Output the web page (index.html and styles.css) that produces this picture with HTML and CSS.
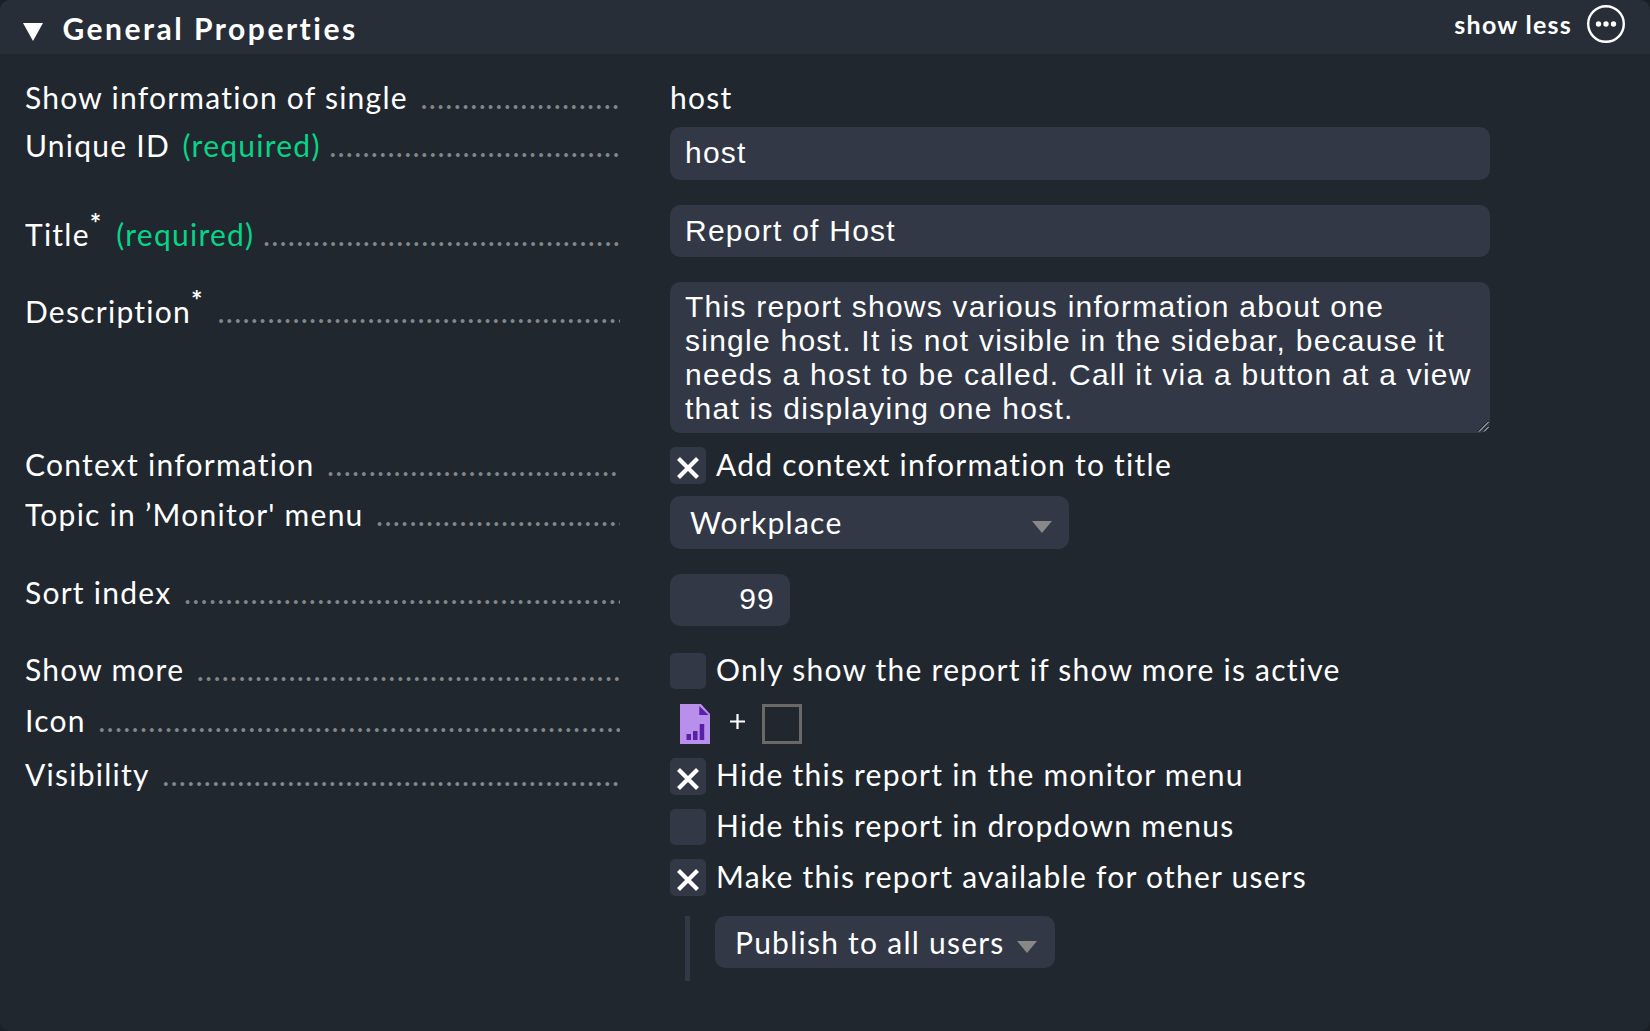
FILE: index.html
```html
<!DOCTYPE html>
<html lang="en">
<head>
<meta charset="utf-8">
<title>General Properties</title>
<link rel="stylesheet" href="styles.css">
</head>
<body>
<form class="panel">
  <header class="panel-head">
    <svg class="fold" width="20" height="18" viewBox="0 0 20 18"><path d="M0 0h20L10 18z" fill="#fff"/></svg>
    <h1 class="panel-title">General Properties</h1>
    <span class="less">show less</span>
    <svg class="more" width="40" height="40" viewBox="0 0 40 40"><circle cx="20" cy="20" r="17.8" fill="none" stroke="#fff" stroke-width="2.4"/><g fill="#fff"><circle cx="12.5" cy="20" r="2.7"/><circle cx="20" cy="20" r="2.7"/><circle cx="27.5" cy="20" r="2.7"/></g></svg>
  </header>
  <div class="rows">
    <div class="row row-info">
      <div class="label"><span>Show information of single</span><span class="dots">........................</span></div>
      <div class="value">host</div>
    </div>
    <div class="row row-id">
      <div class="label"><span>Unique ID</span><span class="req req-id">(required)</span><span class="dots dots-req">...................................</span></div>
      <input class="field field-tall" type="text" value="host">
    </div>
    <div class="row row-title">
      <div class="label label-low"><span>Title</span><span class="star">*</span><span class="req">(required)</span><span class="dots dots-title">...........................................</span></div>
      <input class="field field-title" type="text" value="Report of Host">
    </div>
    <div class="row row-desc">
      <div class="label label-low"><span>Description</span><span class="star">*</span><span class="dots dots-desc">.................................................</span></div>
      <div class="area-wrap">
        <textarea class="field area">This report shows various information about one single host. It is not visible in the sidebar, because it needs a host to be called. Call it via a button at a view that is displaying one host.</textarea>
        <svg class="grip" width="11" height="11" viewBox="0 0 11 11"><path d="M1 10.500L10.500 1M6 10.500L10.500 6" stroke="#d5d7da" stroke-width="1"/><path d="M0 10L10 0M5 10L10 5" stroke="#15181d" stroke-width="0.8"/></svg>
      </div>
    </div>
    <div class="row row-context">
      <div class="label"><span>Context information</span><span class="dots">....................................</span></div>
      <div class="check"><span class="box box-on box-up"><svg width="22" height="22" viewBox="0 0 22 22"><path d="M1.5 1.5l19 19M20.5 1.500L1.500 20.500" stroke="#fff" stroke-width="4.2"/></svg></span><span>Add context information to title</span></div>
    </div>
    <div class="row row-topic">
      <div class="label"><span>Topic in ’Monitor' menu</span><span class="dots">..............................</span></div>
      <div class="select select-topic"><span>Workplace</span><svg width="20" height="12" viewBox="0 0 20 12"><path d="M0 0h20L10 12z" fill="#888"/></svg></div>
    </div>
    <div class="row row-sort">
      <div class="label"><span>Sort index</span><span class="dots">.....................................................</span></div>
      <input class="field num" type="text" value="99">
    </div>
    <div class="row row-more">
      <div class="label"><span>Show more</span><span class="dots">...................................................</span></div>
      <div class="check"><span class="box"></span><span>Only show the report if show more is active</span></div>
    </div>
    <div class="row row-icon">
      <div class="label"><span>Icon</span><span class="dots">...............................................................</span></div>
      <div class="icons">
        <svg width="30" height="40" viewBox="0 0 30 40"><path d="M0 0h21l9 10v30H0z" fill="#b98fec"/><path d="M19.3 2v9H28.500z" fill="#5a1fa8"/><path d="M6.500 30h4.500v6H6.500zM13 27h4.500v9H13zM19.700 20h4.500v16h-4.500z" fill="#5a1fa8"/></svg>
        <svg class="plus" width="15" height="15" viewBox="0 0 15 15"><path d="M7.500 0v15M0 7.500h15" stroke="#fff" stroke-width="2.2"/></svg>
        <span class="emblem"></span>
      </div>
    </div>
    <div class="row">
      <div class="label"><span>Visibility</span><span class="dots">.......................................................</span></div>
      <div class="stack">
        <div class="check"><span class="box box-on"><svg width="22" height="22" viewBox="0 0 22 22"><path d="M1.5 1.5l19 19M20.5 1.500L1.500 20.500" stroke="#fff" stroke-width="4.2"/></svg></span><span>Hide this report in the monitor menu</span></div>
        <div class="check"><span class="box"></span><span>Hide this report in dropdown menus</span></div>
        <div class="check"><span class="box box-on box-up"><svg width="22" height="22" viewBox="0 0 22 22"><path d="M1.5 1.5l19 19M20.5 1.500L1.500 20.500" stroke="#fff" stroke-width="4.2"/></svg></span><span>Make this report available for other users</span></div>
        <div class="nested"><div class="select select-users"><span>Publish to all users</span><svg width="20" height="12" viewBox="0 0 20 12"><path d="M0 0h20L10 12z" fill="#888"/></svg></div></div>
      </div>
    </div>
  </div>
</form>
</body>
</html>
```
FILE: styles.css
```css
* { box-sizing: border-box; }
body {
  margin: 0;
  background: #1a2026;
  color: #fff;
  font: 30px/36px Lato, sans-serif;
  letter-spacing: 1.25px;
}
svg { display: block; flex: none; }
.panel {
  height: 1031px;
  background: #21272e;
  border-radius: 10px;
  overflow: hidden;
}
.panel-head {
  display: flex;
  align-items: flex-start;
  height: 54px;
  padding: 0 24px 0 23px;
  background: #272e37;
}
.fold { margin-top: 23px; }
.panel-title {
  margin: 10px 0 0 19.5px;
  font-size: 30px;
  font-weight: 700;
  letter-spacing: 2.5px;
}
.less {
  margin: 6px 14px 0 auto;
  font-size: 25px;
  font-weight: 700;
}
.more { margin-top: 4px; }
.rows { padding: 25px 160px 0 25px; }
.row {
  display: grid;
  grid-template-columns: 595px 1fr;
  column-gap: 50px;
  align-items: start;
  white-space: nowrap;
}
.row-info { height: 48px; }
.row-id { height: 78px; }
.row-title { height: 77px; }
.row-desc { height: 164px; }
.row-context { height: 50px; }
.row-topic { height: 78px; }
.row-sort { height: 77px; }
.row-more { height: 51px; }
.row-icon { height: 54px; }
.label { display: flex; height: 36px; }
.label-low { margin-top: 11px; }
.dots {
  flex: 1;
  min-width: 0;
  margin-left: 12.5px;
  overflow: hidden;
  color: #85878a;
}
.dots-req { margin-left: 8.5px; }
.dots-title { margin-left: 8.5px; }
.dots-desc { margin-left: 11.5px; }
.req { margin-left: 11.5px; color: #08d487; }
.req-id { margin-left: 12.5px; }
.star {
  width: 15px;
  margin-top: -11px;
  font-size: 27px;
  font-weight: 700;
}
.field {
  display: block;
  width: 820px;
  height: 52px;
  margin: 0;
  padding: 0 15px 2px;
  border: 0;
  border-radius: 10px;
  background: #323845;
  color: #fff;
  font: 30px/34px "Liberation Sans", Arial, sans-serif;
  letter-spacing: 1.25px;
}
.field-tall { height: 53px; }
.field-title { padding-bottom: 0; }
.area-wrap { position: relative; width: 820px; }
.area {
  height: 151px;
  padding: 8px 15px 7px;
  overflow: hidden;
  resize: none;
}
.grip { position: absolute; right: 1px; bottom: 1px; }
.num { width: 120px; text-align: right; }
.check { display: flex; height: 36px; }
.box {
  display: flex;
  justify-content: center;
  width: 36px;
  height: 36px;
  margin: 2px 10px 0 0;
  border-radius: 5px;
  background: #323845;
}
.box-on { height: 37px; padding-top: 10px; }
.box-up { margin-top: 1px; }
.select {
  display: flex;
  justify-content: space-between;
  height: 53px;
  border-radius: 10px;
  background: #323845;
}
.select-topic { width: 399px; padding: 8px 17px 0 20px; }
.select-topic svg { margin-top: 17px; }
.select-users { width: 340px; height: 52px; padding: 8px 18px 0 20px; }
.select-users svg { margin-top: 17px; }
.icons { display: flex; padding: 2px 0 0 10px; }
.plus { margin: 10px 17px 0 20px; }
.emblem {
  width: 40px;
  height: 40px;
  border: 3px solid #6a6967;
}
.stack { display: flex; flex-direction: column; gap: 15px; }
.nested {
  height: 65px;
  margin: 7px 0 0 15px;
  padding-left: 25px;
  border-left: 5px solid #323845;
}
```
